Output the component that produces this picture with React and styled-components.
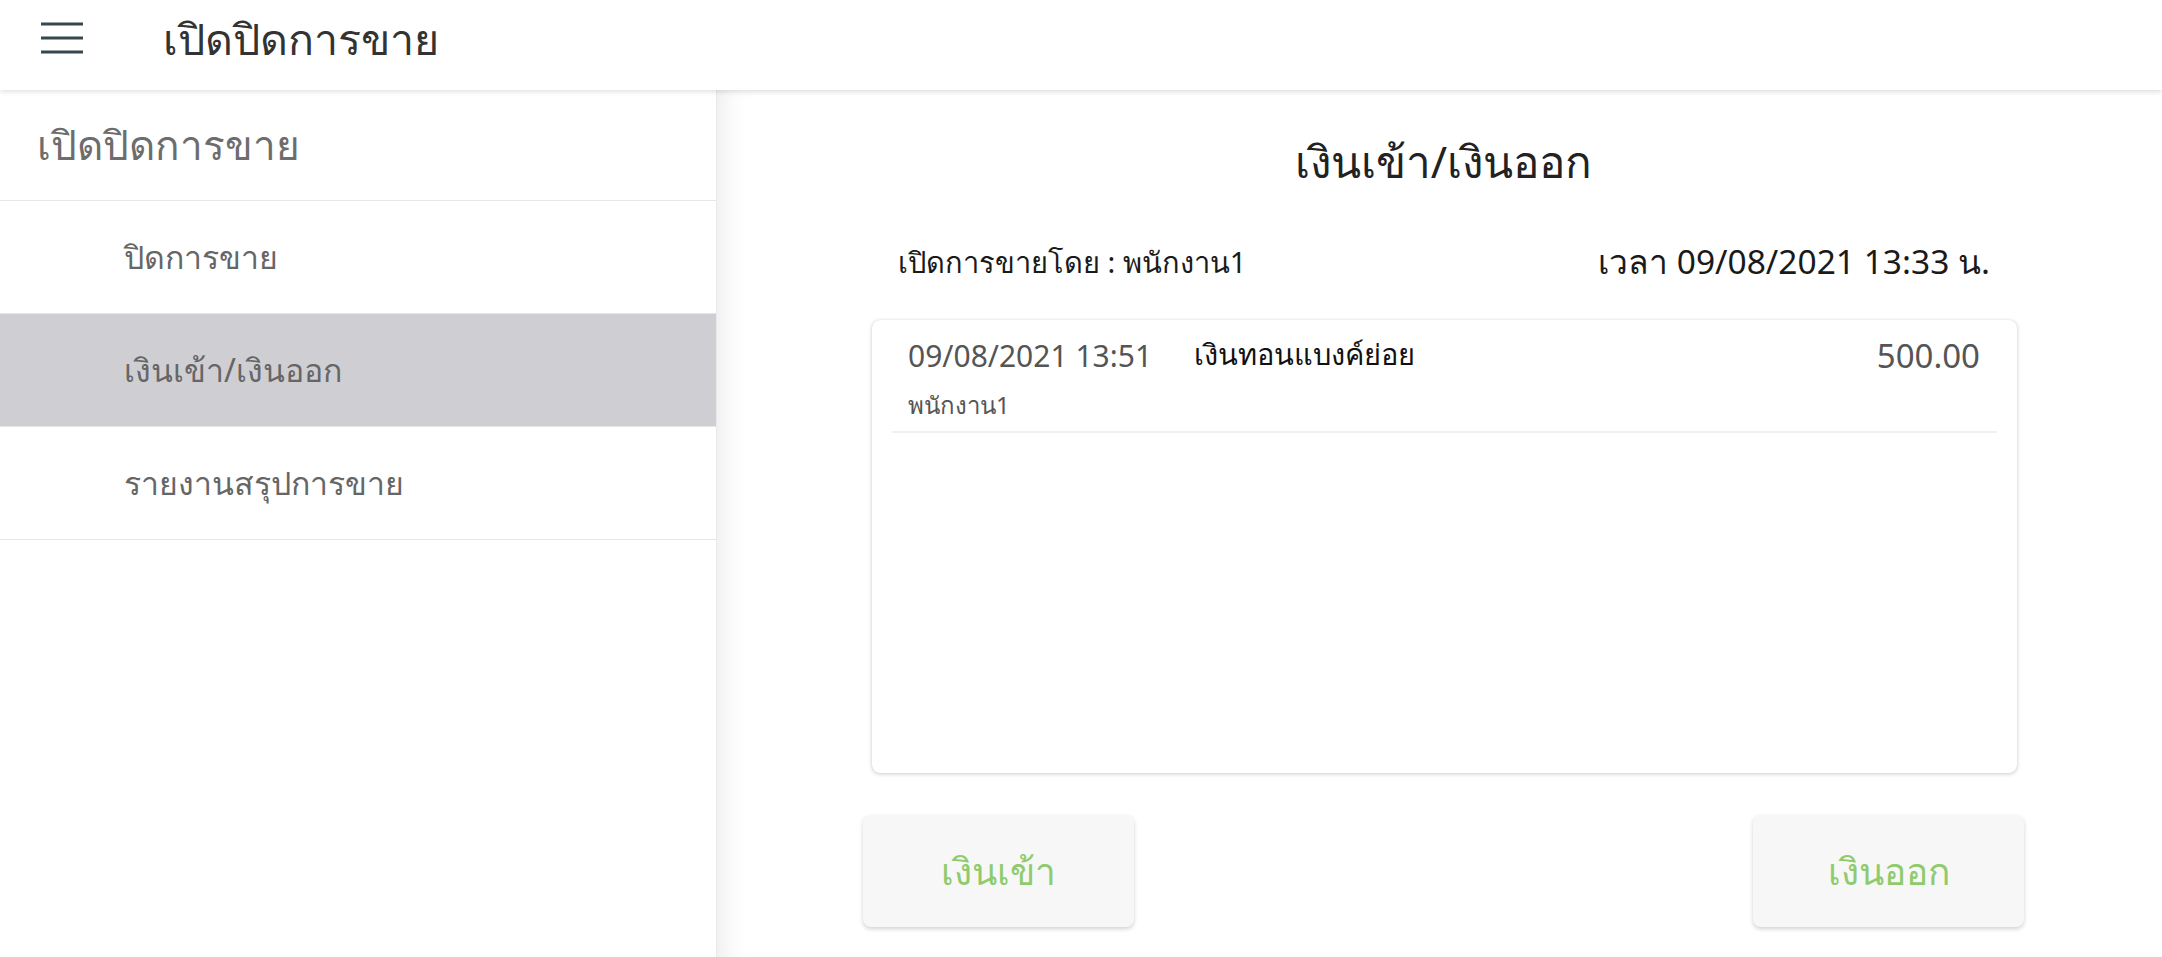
import React from "react";
import styled, { createGlobalStyle } from "styled-components";

const GlobalStyle = createGlobalStyle`
  html, body { margin: 0; padding: 0; background: #fff; }
  body { font-family: "Noto Sans", "DejaVu Sans", sans-serif; }
  * { box-sizing: border-box; }
`;

const Page = styled.div`
  display: flex;
  flex-direction: column;
  width: 100%;
  height: 957px;
  overflow: hidden;
`;

const TopBar = styled.header`
  position: relative;
  z-index: 2;
  height: 90px;
  flex: 0 0 90px;
  display: flex;
  align-items: center;
  padding: 0 0 14px 41px;
  background: #fff;
  box-shadow: 0 2px 5px rgba(0, 0, 0, 0.12);
`;

const MenuButton = styled.button`
  border: 0;
  background: none;
  padding: 0;
  display: flex;
  width: 42px;
  height: 32px;
`;

const TopTitle = styled.h1`
  margin: 0 0 0 80px;
  font-size: 43px;
  font-weight: 400;
  color: #333;
  line-height: 1;
`;

const Body = styled.div`
  flex: 1;
  display: flex;
  min-height: 0;
`;

const Sidebar = styled.nav`
  width: 717px;
  flex: 0 0 717px;
  border-right: 1px solid #e9e9e9;
  background: #fff;
`;

const SideHeader = styled.div`
  height: 111px;
  display: flex;
  align-items: center;
  padding-left: 37px;
  font-size: 40.5px;
  color: #6d6d6d;
  border-bottom: 1px solid #e6e6e6;
`;

const NavItem = styled.div`
  height: 113px;
  display: flex;
  align-items: center;
  padding-left: 124px;
  font-size: 32px;
  color: #666;
  background: ${(p) => (p.$active ? "#cfcfd3" : "#fff")};
  border-bottom: 1px solid #e6e6e6;
`;

const Main = styled.main`
  flex: 1;
  background: #fff;
  box-shadow: inset 22px 0 28px -18px rgba(0, 0, 0, 0.09);
  display: flex;
  justify-content: center;
  padding-left: 8px;
`;

const Content = styled.div`
  width: 1161px;
  display: flex;
  flex-direction: column;
`;

const Title = styled.h2`
  margin: 48px 0 0;
  text-align: center;
  font-size: 44px;
  font-weight: 400;
  color: #222;
  line-height: 46px;
`;

const InfoRow = styled.div`
  display: flex;
  justify-content: space-between;
  align-items: center;
  margin-top: 52px;
  padding: 0 34px 0 35px;
  font-size: 29px;
  color: #1a1a1a;
`;

const Stamp = styled.span`
  font-size: 33.5px;
`;

const Card = styled.section`
  margin: 31px 7px 0 9px;
  height: 453px;
  border-radius: 8px;
  background: #fff;
  box-shadow: 0 1px 4px rgba(0, 0, 0, 0.2), 0 0 1px rgba(0, 0, 0, 0.15);
  padding: 0 20px;
`;

const Entry = styled.div`
  border-bottom: 2px solid #f1f1f1;
  padding: 12px 17px 6px 16px;
`;

const EntryTop = styled.div`
  display: flex;
  align-items: center;
`;

const EntryTime = styled.span`
  font-size: 30px;
  color: #555;
  width: 286px;
`;

const EntryText = styled.span`
  flex: 1;
  font-size: 29px;
  color: #111;
`;

const EntryAmount = styled.span`
  font-size: 33px;
  color: #555;
`;

const EntryUser = styled.div`
  margin-top: 8px;
  font-size: 24px;
  color: #555;
`;

const ButtonRow = styled.div`
  display: flex;
  justify-content: space-between;
  margin-top: 42px;
`;

const ActionButton = styled.button`
  width: 271px;
  height: 112px;
  border: 0;
  border-radius: 8px;
  background: #f7f7f7;
  box-shadow: 0 2px 4px rgba(0, 0, 0, 0.18);
  color: #8fcb6c;
  font-family: inherit;
  font-size: 37px;
  cursor: pointer;
`;

function MenuIcon() {
  return (
    <svg width="42" height="32" viewBox="0 0 42 32">
      <g stroke="#37474f" strokeWidth="3.2" strokeLinecap="butt">
        <line x1="0" y1="2" x2="42" y2="2" />
        <line x1="0" y1="16" x2="42" y2="16" />
        <line x1="0" y1="30" x2="42" y2="30" />
      </g>
    </svg>
  );
}

export default function App() {
  const items = [
    { label: "ปิดการขาย" },
    { label: "เงินเข้า/เงินออก", active: true },
    { label: "รายงานสรุปการขาย" },
  ];
  return (
    <>
      <GlobalStyle />
      <Page>
        <TopBar>
          <MenuButton aria-label="menu">
            <MenuIcon />
          </MenuButton>
          <TopTitle>เปิดปิดการขาย</TopTitle>
        </TopBar>
        <Body>
          <Sidebar>
            <SideHeader>เปิดปิดการขาย</SideHeader>
            {items.map((it) => (
              <NavItem key={it.label} $active={it.active}>
                {it.label}
              </NavItem>
            ))}
          </Sidebar>
          <Main>
            <Content>
              <Title>เงินเข้า/เงินออก</Title>
              <InfoRow>
                <span>เปิดการขายโดย : พนักงาน1</span>
                <Stamp>เวลา 09/08/2021 13:33 น.</Stamp>
              </InfoRow>
              <Card>
                <Entry>
                  <EntryTop>
                    <EntryTime>09/08/2021 13:51</EntryTime>
                    <EntryText>เงินทอนแบงค์ย่อย</EntryText>
                    <EntryAmount>500.00</EntryAmount>
                  </EntryTop>
                  <EntryUser>พนักงาน1</EntryUser>
                </Entry>
              </Card>
              <ButtonRow>
                <ActionButton>เงินเข้า</ActionButton>
                <ActionButton>เงินออก</ActionButton>
              </ButtonRow>
            </Content>
          </Main>
        </Body>
      </Page>
    </>
  );
}
